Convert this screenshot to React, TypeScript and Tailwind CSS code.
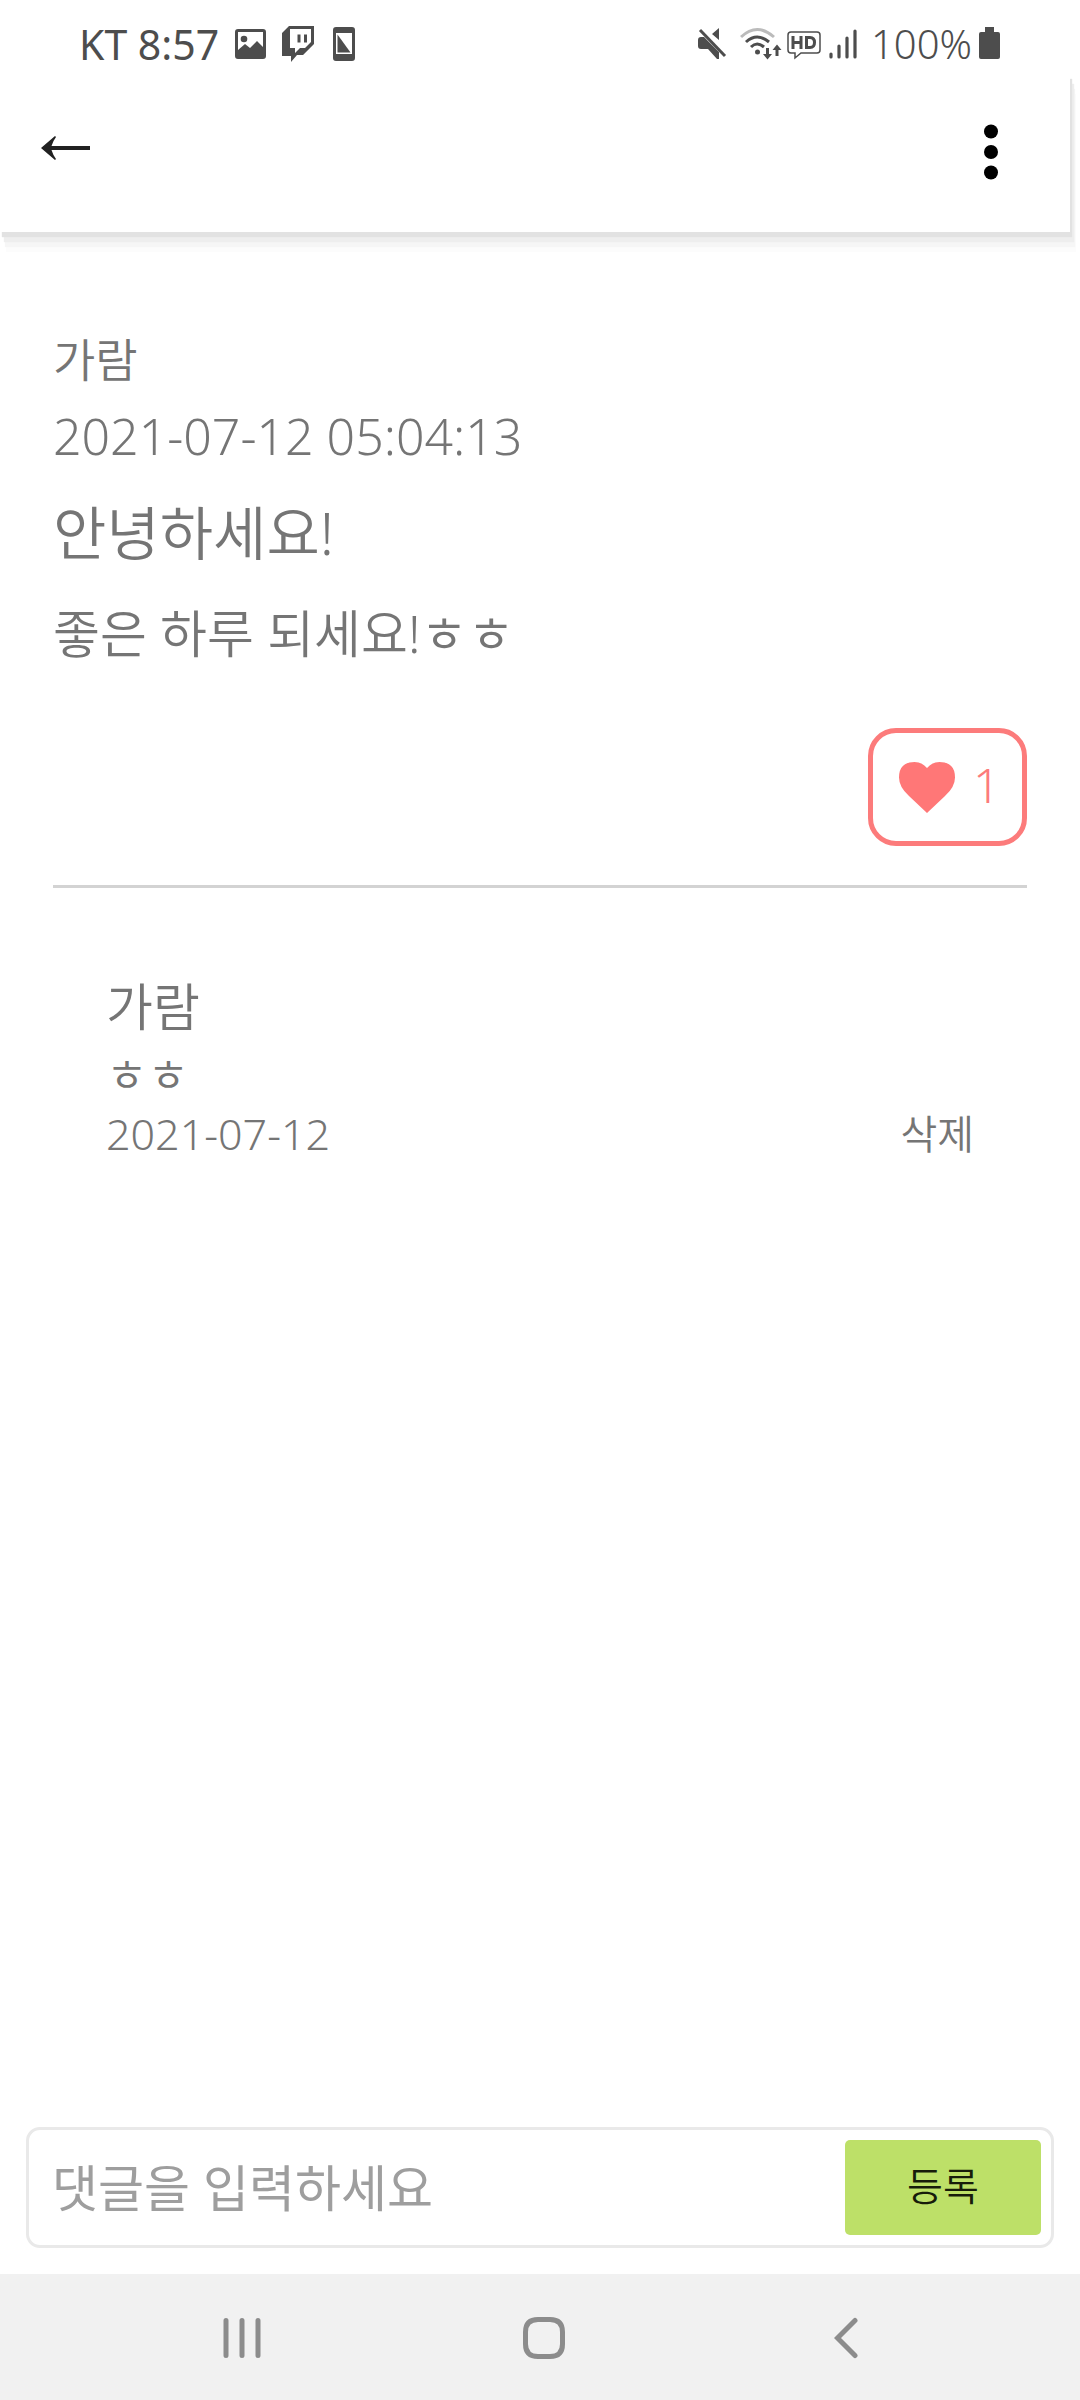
import { useState } from "react";

const StatusBar = () => {
  return (
    <div className="flex h-[74px] items-center justify-between pt-[14px] pl-[79px] pr-[80px] leading-[42px] text-[#4d4d4d]">
      <div className="flex items-center text-[41px]">
        <span className="mr-[16px]">KT 8:57</span>
        <svg className="mr-[16px]" width="31" height="31" viewBox="0 0 31 31" fill="currentColor" aria-hidden="true">
          <path fillRule="evenodd" d="M3 0H28Q31 0 31 3V27Q31 30 28 30H3Q0 30 0 27V3Q0 0 3 0ZM3 3V21L10 15L15 19L22 12L28 18V3Z" />
          <circle cx="9" cy="10" r="3.3" />
        </svg>
        <svg className="mr-[19px]" width="32" height="36" viewBox="0 0 32 36" fill="currentColor" aria-hidden="true">
          <path fillRule="evenodd" d="M7 0H32V18L21 29H15L9 36V30H0V7ZM8 3V22H13V27L18 22H23L29 16V3Z" />
          <path d="M15.500 8.500h3v8h-3zM22 8.500h3v8h-3z" />
        </svg>
        <svg width="22" height="34" viewBox="0 0 22 34" fill="currentColor" aria-hidden="true">
          <path fillRule="evenodd" d="M3 0H19Q22 0 22 3V31Q22 34 19 34H3Q0 34 0 31V3Q0 0 3 0ZM3 6V27H19V6Z" />
          <path d="M4.500 7.500V25.500H17.500Z" />
        </svg>
      </div>
      <div className="flex items-center text-[40px]">
        <svg className="mr-[12px]" width="30" height="34" viewBox="0 0 30 34" fill="currentColor" aria-hidden="true">
          <path d="M21 1V13L14 7ZM3 10H6L21 25V32H19L10 22H3Q0 22 0 19V13Q0 10 3 10Z" />
          <path d="M2 3L27 29" stroke="currentColor" strokeWidth="3" />
        </svg>
        <svg className="mr-[5px]" width="42" height="34" viewBox="0 0 42 34" fill="none" stroke="currentColor" strokeWidth="3" aria-hidden="true">
          <path d="M1 10Q17 -5 34 10" stroke="#bbbbbb" />
          <path d="M6 15Q17 5 29 15" />
          <path d="M11 20Q17 14 24 20" />
          <circle cx="17.500" cy="25" r="2.500" fill="currentColor" stroke="none" />
          <path d="M27.500 21V28M37 29V22" />
          <path d="M23 27H32L27.500 32.500ZM32.500 23H41.500L37 17.500Z" fill="currentColor" stroke="none" />
        </svg>
        <svg className="mr-[8px]" width="34" height="34" viewBox="0 0 34 34" fill="none" stroke="currentColor" aria-hidden="true">
          <path d="M4 5H30Q33 5 33 8V23Q33 26 30 26H14L8 31V26H4Q1 26 1 23V8Q1 5 4 5Z" strokeWidth="1.500" />
          <path d="M6 9V22M14 9V22M6 15.500H14M19.500 10.500V20.500H23Q27.500 20.500 27.500 15.500Q27.500 10.500 23 10.500Z" strokeWidth="3" />
        </svg>
        <svg className="mr-[14px]" width="28" height="34" viewBox="0 0 28 34" stroke="currentColor" strokeWidth="3.200" strokeLinecap="round" aria-hidden="true">
          <path d="M2 27V30M10 19V30M18 11V30M26 4V30" />
        </svg>
        <span className="mr-[7px] font-[350]">100%</span>
        <svg width="21" height="34" viewBox="0 0 21 34" fill="currentColor" aria-hidden="true">
          <path d="M6 0H15V5H19Q21 5 21 7V30Q21 32 19 32H2Q0 32 0 30V7Q0 5 2 5H6Z" />
        </svg>
      </div>
    </div>
  );
};

const Header = () => {
  return (
    <header className="mr-[10px] flex h-[158px] items-start justify-between bg-white pt-[47px] pl-[34px] pr-[64px] shadow-[2px_5px_1px_#e2e2e2,4px_10px_1px_#eeeeee,5px_15px_1px_#f6f6f6,6px_20px_1px_#fcfcfc]">
      <button type="button" aria-label="뒤로" className="flex h-[54px] w-[64px] items-center pl-[7px]">
        <svg width="49" height="24" viewBox="0 0 49 24" fill="#212121">
          <path d="M0 12L14 0L15 1Q12 5 10.500 10H49V14H10.500Q12 19 15 23L14 24Z" />
        </svg>
      </button>
      <button type="button" aria-label="메뉴" className="flex h-[62px] w-[30px] items-center justify-center">
        <svg width="14" height="56" viewBox="0 0 14 56" fill="black">
          <circle cx="7" cy="7.500" r="7" />
          <circle cx="7" cy="28" r="7" />
          <circle cx="7" cy="48.500" r="7" />
        </svg>
      </button>
    </header>
  );
};

interface IPost {
  writer: string;
  date: string;
  title: string;
  body: string;
}

const Post = (props: IPost & { likes: number }) => {
  return (
    <article className="mx-[53px] flex flex-col border-b-[3px] border-[#d3d3d3] pt-[91px] pb-[39px] font-[350]">
      <h3 className="text-[46px] leading-[72px]">{props.writer}</h3>
      <time className="text-[50px] leading-[82px]">{props.date}</time>
      <h1 className="text-[58px] leading-[112px] font-[350]">{props.title}</h1>
      <p className="text-[51px] leading-[88px]">{props.body}</p>
      <button
        type="button"
        aria-label="좋아요"
        className="mt-[51px] flex h-[118px] w-[159px] items-center self-end rounded-[28px] border-[5px] border-[#fc7b7b] pl-[26px] text-[48px] leading-[48px] font-light text-[#fc7b7b]"
      >
        <svg className="mr-[18px]" width="56" height="51" viewBox="0 0 56 51" fill="#ff7777" aria-hidden="true">
          <path d="M28 51L10 34Q0 25 0 15.500Q0 0 15.500 0Q23 0 28 6Q33 0 40.500 0Q56 0 56 15.500Q56 25 46 34Z" />
        </svg>
        <span className="pb-[4px]">{props.likes}</span>
      </button>
    </article>
  );
};

const Comment = (props: { writer: string; text: string; date: string }) => {
  return (
    <li className="mx-[106px] flex flex-col font-[350]">
      <h3 className="text-[51px] leading-[76px]">{props.writer}</h3>
      <p className="text-[45px] leading-[61px]">{props.text}</p>
      <div className="flex items-center justify-between">
        <time className="text-[43px] leading-[58px]">{props.date}</time>
        <button type="button" className="text-[40px] leading-[58px]">삭제</button>
      </div>
    </li>
  );
};

const CommentForm = () => {
  const [text, setText] = useState("");
  return (
    <form
      onSubmit={(e) => e.preventDefault()}
      className="mx-[26px] mb-[26px] flex h-[121px] items-center rounded-[14px] border-[3px] border-[#e9e9e9] pl-[23px] pr-[10px]"
    >
      <input
        type="text"
        aria-label="댓글"
        value={text}
        onChange={(e) => setText(e.target.value)}
        placeholder="댓글을 입력하세요"
        className="h-[95px] min-w-0 flex-1 text-[50px] outline-none placeholder:text-[#9e9e9e]"
      />
      <button type="submit" className="h-[95px] w-[196px] rounded-[5px] bg-[#bde068] pb-[2px] text-[39px] font-[350] text-[#171c0a]">
        등록
      </button>
    </form>
  );
};

const NavBar = () => {
  return (
    <nav className="flex h-[126px] items-center justify-center gap-[2px] bg-[#f1f1f1] pt-[2px] pl-[8px]">
      <button type="button" aria-label="최근 앱" className="flex w-[28%] justify-center">
        <svg width="38" height="42" viewBox="0 0 38 42" stroke="#8c8c8c" strokeWidth="5" strokeLinecap="round">
          <path d="M3 3.500V38.500M19 3.500V38.500M35 3.500V38.500" />
        </svg>
      </button>
      <button type="button" aria-label="홈" className="flex w-[28%] justify-center">
        <svg width="42" height="42" viewBox="0 0 42 42" fill="none" stroke="#8c8c8c" strokeWidth="5">
          <path d="M15 2.500H27Q39.500 2.500 39.500 15V27Q39.500 39.500 27 39.500H15Q2.500 39.500 2.500 27V15Q2.500 2.500 15 2.500Z" />
        </svg>
      </button>
      <button type="button" aria-label="뒤로 가기" className="flex w-[28%] justify-center">
        <svg width="24" height="42" viewBox="0 0 24 42" fill="none" stroke="#8c8c8c" strokeWidth="5" strokeLinecap="round">
          <path d="M21 3.500L3.500 21L21 38.500" />
        </svg>
      </button>
    </nav>
  );
};

const App = () => {
  return (
    <div className="flex min-h-screen flex-col bg-white font-['Noto_Sans','Noto_Sans_CJK_KR',sans-serif] text-[#757575]">
      <StatusBar />
      <Header />
      <main className="flex flex-1 flex-col">
        <Post writer="가람" date="2021-07-12 05:04:13" title="안녕하세요!" body="좋은 하루 되세요!ㅎㅎ" likes={1} />
        <ul className="flex-1 pt-[80px]">
          <Comment writer="가람" text="ㅎㅎ" date="2021-07-12" />
        </ul>
        <CommentForm />
      </main>
      <NavBar />
    </div>
  );
};

export default App;
